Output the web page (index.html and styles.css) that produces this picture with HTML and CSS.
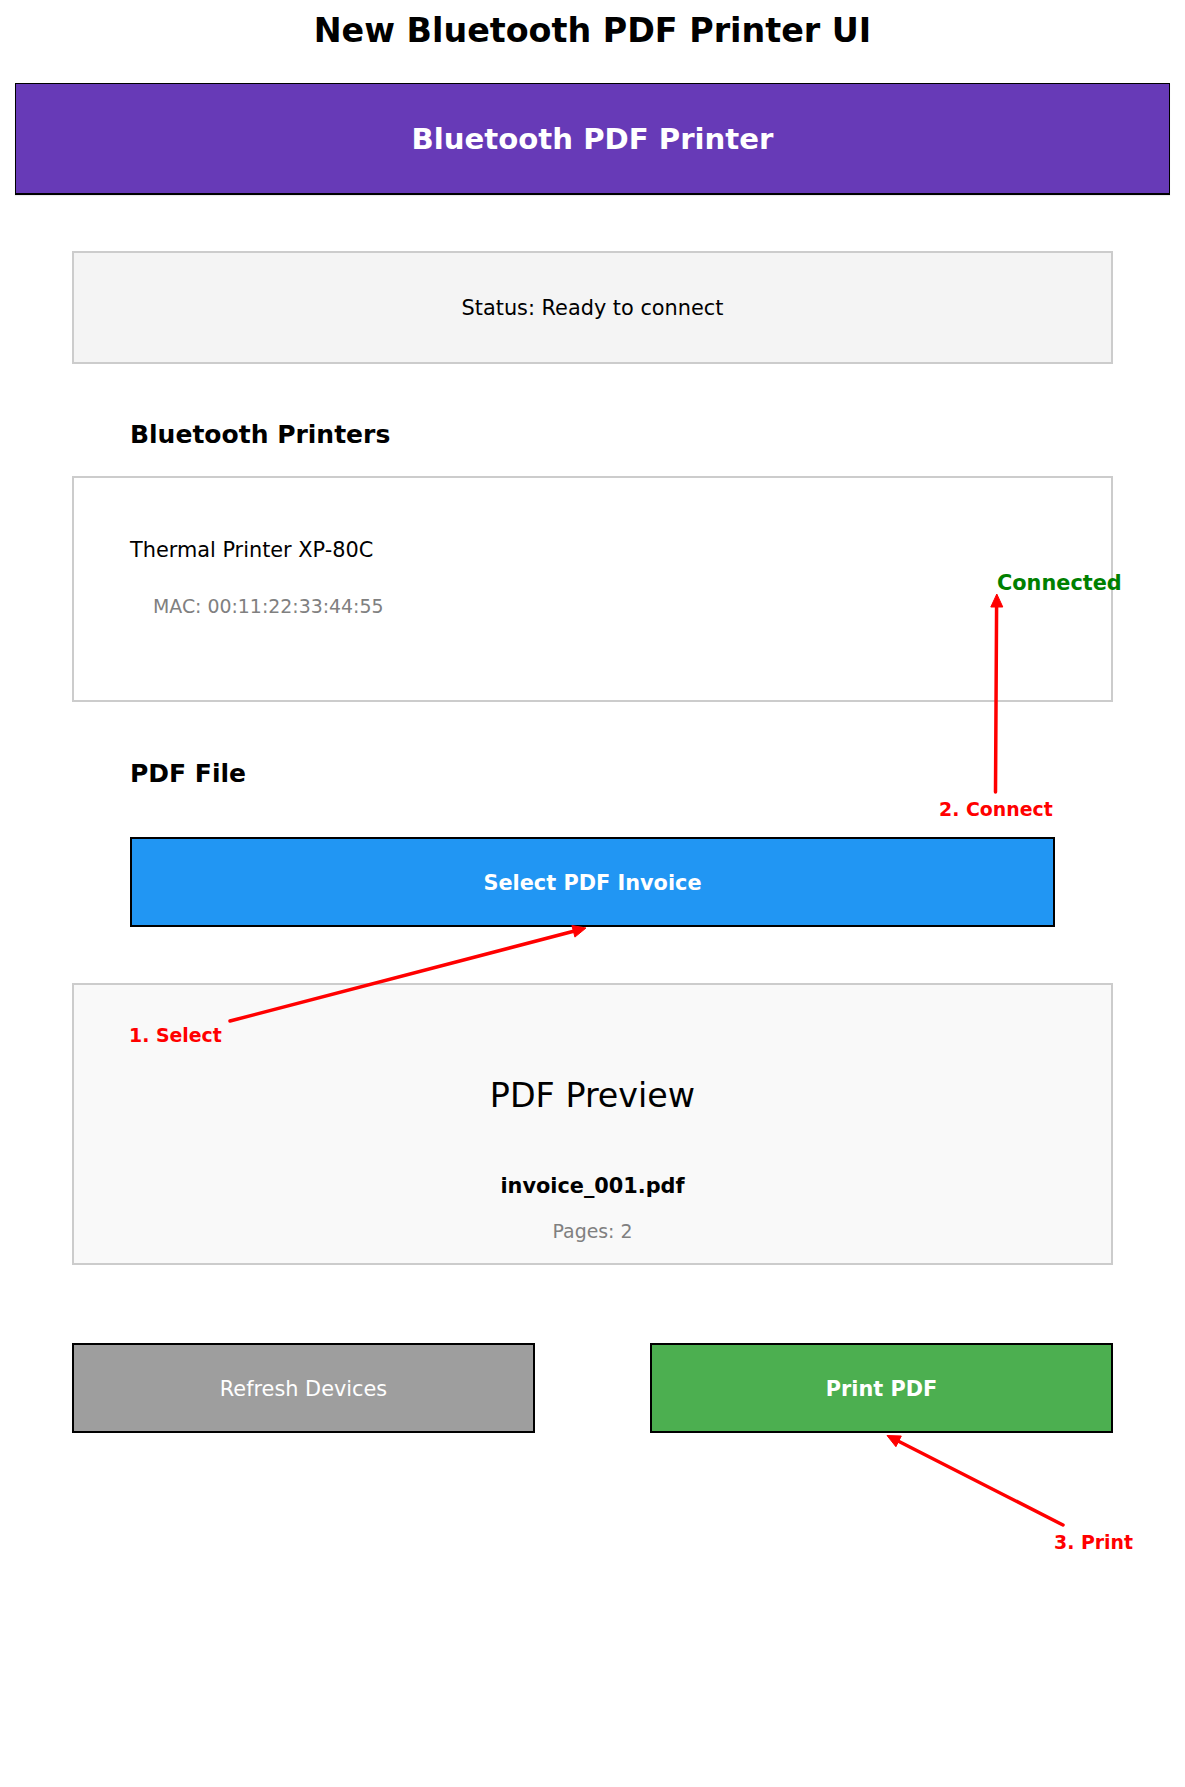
FILE: index.html
```html
<!DOCTYPE html>
<html lang="en">
<head>
<meta charset="utf-8">
<title>New Bluetooth PDF Printer UI</title>
<link rel="stylesheet" href="styles.css">
</head>
<body>
<div class="page">
  <h1 class="title">New Bluetooth PDF Printer UI</h1>
  <header class="appbar">Bluetooth PDF Printer</header>
  <main class="content">
    <div class="status">Status: Ready to connect</div>
    <h2 class="section-title section-printers">Bluetooth Printers</h2>
    <div class="device-list">
      <div class="device-name">Thermal Printer XP-80C</div>
      <div class="device-mac">MAC: 00:11:22:33:44:55</div>
    </div>
    <h2 class="section-title section-file">PDF File</h2>
    <button class="btn btn-select">Select PDF Invoice</button>
    <div class="preview">
      <div class="preview-title">PDF Preview</div>
      <div class="preview-file">invoice_001.pdf</div>
      <div class="preview-pages">Pages: 2</div>
    </div>
    <div class="actions">
      <button class="btn btn-refresh">Refresh Devices</button>
      <button class="btn btn-print">Print PDF</button>
    </div>
  </main>
  <div class="annotations">
    <svg class="arrows" width="1185" height="1787" viewBox="0 0 1185 1787">
      <line x1="995.5" y1="792" x2="996.6" y2="605" class="arrow-line"/>
      <polygon points="996.8,594 990.8,607 1002.8,607" class="arrow-head"/>
      <line x1="230" y1="1021" x2="574.5" y2="931" class="arrow-line"/>
      <polygon points="586,928 574.9,937.1 571.9,925.5" class="arrow-head"/>
      <line x1="1063" y1="1525" x2="899.5" y2="1441.8" class="arrow-line"/>
      <polygon points="887,1435.5 901.3,1436 895.9,1446.7" class="arrow-head"/>
    </svg>
    <span class="note note-connected">Connected</span>
    <span class="note note-connect">2. Connect</span>
    <span class="note note-select">1. Select</span>
    <span class="note note-print">3. Print</span>
  </div>
</div>
</body>
</html>
```
FILE: styles.css
```css
* { box-sizing: border-box; }
html, body { margin: 0; padding: 0; background: #fff; }
body { font-family: "DejaVu Sans", "Liberation Sans", sans-serif; color: #000; }

.page { position: relative; width: 1185px; height: 1787px; overflow: hidden; }

.title {
  margin: 0;
  padding-top: 11px;
  font-size: 33.33px;
  font-weight: bold;
  line-height: 40px;
  text-align: center;
}

.appbar {
  margin: 32px 0 0 15px;
  width: 1155px;
  height: 112px;
  background: #673ab7;
  border: 1px solid #000;
  border-bottom-width: 2px;
  box-shadow: 0 1px 1px rgba(0,0,0,0.08);
  color: #fff;
  font-size: 29.17px;
  font-weight: bold;
  line-height: 34px;
  display: flex;
  align-items: center;
  justify-content: center;
}

.content { margin: 0 72px; }

.status {
  margin-top: 56px;
  height: 113px;
  background: #f4f4f4;
  border: 2px solid #ccc;
  padding-top: 2px;
  display: flex;
  align-items: center;
  justify-content: center;
  font-size: 20.83px;
  line-height: 25px;
}

.section-title {
  margin: 0;
  padding-left: 58px;
  font-size: 25px;
  line-height: 30px;
  font-weight: bold;
}
.section-printers { margin-top: 56px; margin-bottom: 26px; }
.section-file { margin-top: 57px; margin-bottom: 48px; }

.device-list {
  height: 226px;
  background: #fff;
  border: 2px solid #ccc;
  padding: 60px 0 0 56px;
}
.device-name { font-size: 20.83px; line-height: 25px; }
.device-mac {
  margin-top: 32px;
  padding-left: 23px;
  font-size: 18.9px;
  line-height: 22px;
  color: #808080;
}

.btn {
  appearance: none;
  display: flex;
  align-items: center;
  justify-content: center;
  height: 90px;
  padding: 2px 0 0;
  margin: 0;
  border: 2px solid #000;
  border-radius: 0;
  color: #fff;
  font-family: inherit;
  font-size: 20.83px;
  line-height: 25px;
}
.btn-select {
  margin-left: 58px;
  width: 925px;
  background: #2196f3;
  font-weight: bold;
}

.preview {
  margin-top: 56px;
  height: 282px;
  background: #f9f9f9;
  border: 2px solid #ccc;
  padding-top: 91px;
  text-align: center;
}
.preview-title { font-size: 33.33px; line-height: 40px; }
.preview-file { margin-top: 58px; font-size: 20.83px; line-height: 25px; font-weight: bold; }
.preview-pages { margin-top: 21px; font-size: 18.9px; line-height: 22px; color: #808080; }

.actions {
  margin-top: 78px;
  display: grid;
  grid-template-columns: 463px 463px;
  justify-content: space-between;
}
.btn-refresh { width: 463px; background: #9e9e9e; font-weight: normal; }
.btn-print { width: 463px; background: #4caf50; font-weight: bold; }

.annotations { position: absolute; top: 0; left: 0; width: 1185px; height: 1787px; pointer-events: none; }
.arrows { position: absolute; top: 0; left: 0; }
.arrow-line { stroke: #ff0000; stroke-width: 3.5; stroke-linecap: round; }
.arrow-head { fill: #ff0000; stroke: #ff0000; stroke-width: 1; stroke-linejoin: round; }

.note {
  position: absolute;
  font-size: 18.9px;
  line-height: 22px;
  font-weight: bold;
  color: #ff0000;
  white-space: nowrap;
}
.note-connected { left: 997px; top: 571px; font-size: 20.83px; line-height: 25px; color: #008000; }
.note-connect { left: 939px; top: 798px; }
.note-select { left: 129px; top: 1024px; }
.note-print { left: 1054px; top: 1531px; }
```
